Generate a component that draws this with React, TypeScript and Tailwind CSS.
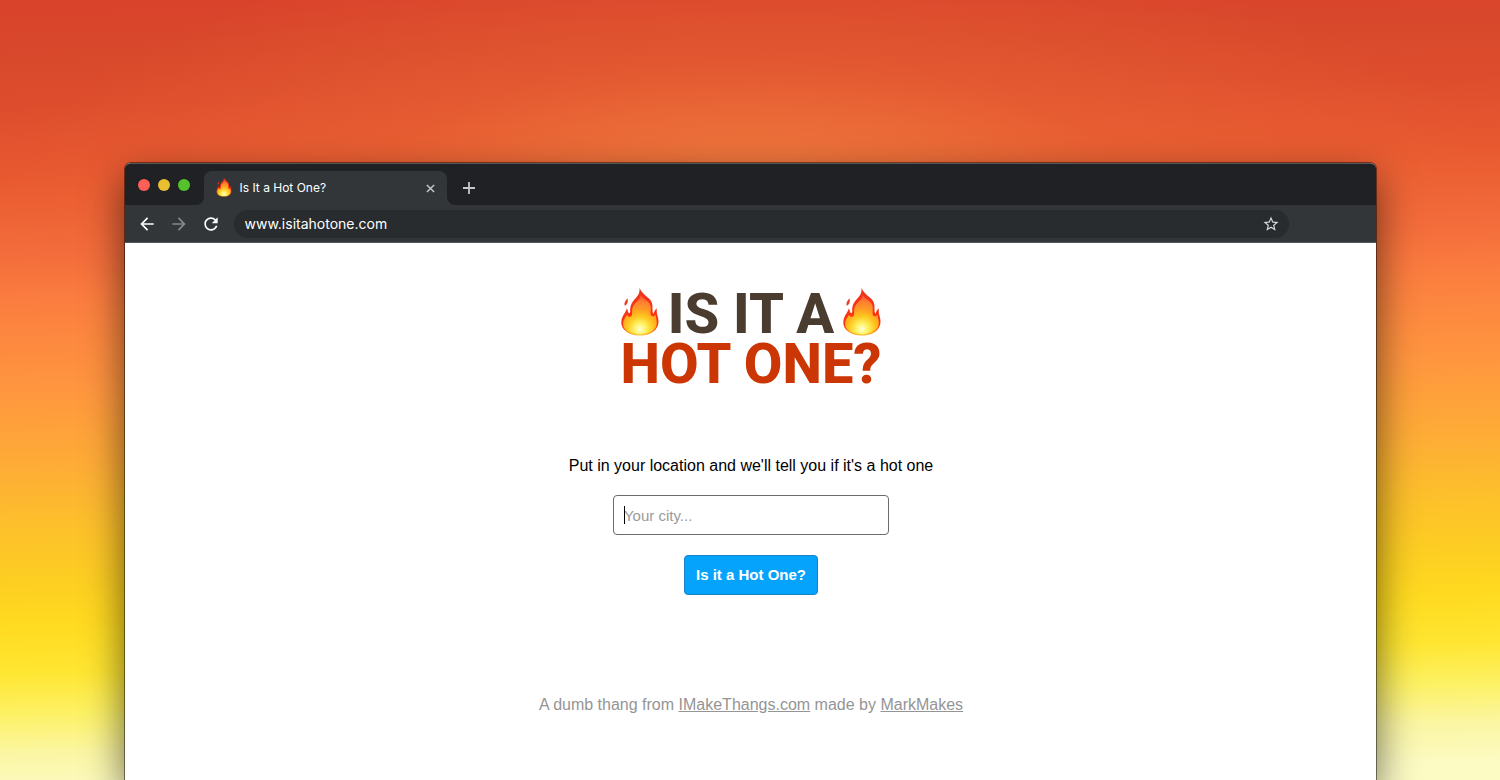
import React, { useState } from "react";

const NAV_ICON = "h-5 w-5 fill-current";

function Flame({ id, className }: { id: string; className: string }) {
  return (
    <svg viewBox="0 2 40 50" className={className} aria-hidden="true" overflow="visible">
      <defs>
        <radialGradient id={`${id}-outer`} gradientUnits="userSpaceOnUse" cx="20" cy="44" r="40">
          <stop offset="0" stopColor="#ffd83a" />
          <stop offset="0.28" stopColor="#ff9a1c" />
          <stop offset="0.46" stopColor="#fb3512" />
          <stop offset="0.78" stopColor="#f5321a" />
          <stop offset="1" stopColor="#ea351c" />
        </radialGradient>
        <radialGradient id={`${id}-inner`} gradientUnits="userSpaceOnUse" cx="20" cy="42" r="34">
          <stop offset="0" stopColor="#fffee0" />
          <stop offset="0.16" stopColor="#fff468" />
          <stop offset="0.38" stopColor="#ffc81f" />
          <stop offset="0.58" stopColor="#ff9d24" />
          <stop offset="0.8" stopColor="#ff7f30" />
          <stop offset="1" stopColor="#f9502c" />
        </radialGradient>
      </defs>
      <path
        fill={`url(#${id}-outer)`}
        d="M19.5 1C20 5 18.7 8 15.8 11C12.5 14.5 10 17.8 10.2 24C10.3 26.5 8.6 27 8 24.8C7.7 23.2 7.4 22.2 6.7 21.6C6.4 25 1.8 28.3 1.3 35C0.9 42.5 8.5 48.5 20 48.5C31.5 48.5 38.5 42.5 38.5 34.5C38.5 29.6 36.3 27.8 36.8 21.2C35 22.6 34 24.6 33.7 26.6C32.1 25.8 32.8 22.5 32.3 17.5C31.7 10.6 23.5 9.6 19.5 1Z"
      />
      <path fill="#ee3b24" d="M7.5 11.2C8.3 14.6 7.7 17 4.8 18.8C3.7 16.2 5 14 7.5 11.2Z" />
      <path
        fill={`url(#${id}-inner)`}
        d="M20.8 7.5C20.8 12 15.2 15.5 13.2 19C11.2 22.6 13 27.9 11.4 29.2C9.8 30.4 7.6 29.6 7.1 27.7C5.2 30.5 3 33 3.1 37C3.5 43.8 11 47.2 20 47.2C29.2 47.2 36.7 43 36.8 36C36.9 33 35.7 30.5 35.5 27.7C33.5 29.9 31.2 29.6 30.7 27.5C30.1 25 31.4 21.8 30.3 18.1C28.8 13.6 22.8 12.5 20.8 7.5Z"
      />
    </svg>
  );
}

function TabBar() {
  return (
    <div className="flex items-end bg-[#202124] pt-[7px]">
      <div className="flex gap-2 self-start pt-2 pr-[14px] pl-[13px]">
        <span className="h-3 w-3 rounded-full bg-[#fb5f57]" />
        <span className="h-3 w-3 rounded-full bg-[#e8bf30]" />
        <span className="h-3 w-3 rounded-full bg-[#55c22c]" />
      </div>
      <div className="relative flex h-[34px] w-[243px] items-center rounded-t-lg bg-[#323639] px-3 text-white">
        <Flame id="favicon" className="h-5 w-4" />
        <span className="ml-2 flex-1 text-xs">Is It a Hot One?</span>
        <button type="button" aria-label="Close tab" className="text-[#c5c8ca]">
          <svg viewBox="0 0 10 10" className="h-[9px] w-[9px]" fill="none" stroke="currentColor" strokeWidth="1.6">
            <path d="M1 1L9 9M9 1L1 9" />
          </svg>
        </button>
        <svg viewBox="0 0 8 8" className="absolute bottom-0 -left-2 h-2 w-2 fill-[#323639]" aria-hidden="true">
          <path d="M8 0V8H0A8 8 0 0 0 8 0Z" />
        </svg>
        <svg viewBox="0 0 8 8" className="absolute -right-2 bottom-0 h-2 w-2 fill-[#323639]" aria-hidden="true">
          <path d="M0 0V8H8A8 8 0 0 1 0 0Z" />
        </svg>
      </div>
      <button type="button" aria-label="New tab" className="flex h-[34px] items-center px-4 text-[#c5c8ca]">
        <svg viewBox="0 0 12 12" className="h-3 w-3" fill="none" stroke="currentColor" strokeWidth="1.8">
          <path d="M6 0V12M0 6H12" />
        </svg>
      </button>
    </div>
  );
}

function Toolbar() {
  const [url, setUrl] = useState("www.isitahotone.com");

  return (
    <div className="flex h-[38px] items-center border-b border-[#54585b] bg-[#323639] pr-[87px] pl-3 text-white">
      <div className="flex items-center gap-3">
        <button type="button" aria-label="Back">
          <svg viewBox="0 0 24 24" className={NAV_ICON}>
            <path d="M20 11H7.83l5.59-5.59L12 4l-8 8 8 8 1.41-1.41L7.83 13H20v-2z" />
          </svg>
        </button>
        <button type="button" aria-label="Forward" className="text-[#86898c]">
          <svg viewBox="0 0 24 24" className={NAV_ICON}>
            <path d="M12 4l-1.41 1.41L16.17 11H4v2h12.17l-5.58 5.59L12 20l8-8z" />
          </svg>
        </button>
        <button type="button" aria-label="Reload">
          <svg viewBox="0 0 24 24" className={NAV_ICON}>
            <path d="M17.65 6.35C16.2 4.9 14.21 4 12 4c-4.42 0-7.99 3.58-7.99 8s3.57 8 7.99 8c3.73 0 6.84-2.55 7.73-6h-2.08c-.82 2.33-3.04 4-5.65 4-3.31 0-6-2.69-6-6s2.69-6 6-6c1.66 0 3.14.69 4.22 1.78L13 11h7V4l-2.35 2.35z" />
          </svg>
        </button>
      </div>
      <div className="ml-[13px] flex h-7 flex-1 items-center rounded-full bg-[#282c2f] pr-[9px] pl-[11px]">
        <input
          type="text"
          aria-label="Address"
          value={url}
          onChange={(event) => setUrl(event.target.value)}
          className="min-w-0 flex-1 bg-transparent text-sm outline-none"
        />
        <button type="button" aria-label="Bookmark this page" className="text-[#d5d7d9]">
          <svg viewBox="0 0 24 24" className="h-[18px] w-[18px] fill-current">
            <path d="M22 9.24l-7.19-.62L12 2 9.19 8.63 2 9.24l5.46 4.73L5.82 21 12 17.27 18.18 21l-1.63-7.03L22 9.24zM12 15.4l-3.76 2.27 1-4.28-3.32-2.88 4.38-.38L12 6.1l1.71 4.04 4.38.38-3.32 2.88 1 4.28L12 15.4z" />
          </svg>
        </button>
      </div>
    </div>
  );
}

function Logo() {
  return (
    <h1 className="flex w-[262px] flex-col text-center font-['Roboto',sans-serif] text-[56px] leading-[50px] font-extrabold whitespace-nowrap">
      <span className="flex items-center justify-between text-[#4b3c30]">
        <Flame id="flame-left" className="h-[50px] w-10" />
        <span>IS IT A</span>
        <Flame id="flame-right" className="h-[50px] w-10" />
      </span>
      <span className="text-[#cb3604]">HOT ONE?</span>
    </h1>
  );
}

function LocationForm() {
  const [city, setCity] = useState("");

  return (
    <form onSubmit={(event) => event.preventDefault()} className="mt-[65px] flex flex-col items-center">
      <label htmlFor="city" className="text-base text-black">
        Put in your location and we'll tell you if it's a hot one
      </label>
      <div className="relative mt-[17px]">
        <input
          id="city"
          type="text"
          value={city}
          placeholder="Your city..."
          onChange={(event) => setCity(event.target.value)}
          className="block h-10 w-[276px] rounded border border-[#6b6b6b] px-[10px] text-[15px] text-black outline-none placeholder:text-[#9a9a9a]"
        />
        {city === "" ? <span className="absolute top-[11px] left-[11px] h-[18px] w-px bg-black" /> : null}
      </div>
      <button
        type="submit"
        className="mt-5 h-10 rounded border border-[#1583c4] bg-[#05a3fc] px-[11px] text-[15px] font-bold text-white"
      >
        Is it a Hot One?
      </button>
    </form>
  );
}

export default function App() {
  return (
    <div className="min-h-screen overflow-hidden bg-[radial-gradient(ellipse_50%_32%_at_50%_24%,rgba(242,132,66,0.8),rgba(236,104,54,0.45)_50%,rgba(230,90,45,0)),linear-gradient(178.8deg,#d9422b_0%,#d8482b_7%,#dd4d2d_13%,#e85930_22%,#f46e3c_32%,#fb7d3f_37%,#ff963f_48%,#feab37_57%,#fdc02b_65%,#fdcf22_72%,#ffda20_77%,#ffe632_83%,#fdf164_88%,#fbf6a4_93%,#fcfbc4_98%)] px-[8.3%] pt-[163px] font-['Liberation_Sans',Arial,sans-serif]">
      <div className="min-h-[calc(100vh-163px)] rounded-t-md bg-white shadow-[0_16px_40px_rgba(0,0,0,0.6),0_0_0_1px_rgba(0,0,0,0.45)]">
        <header className="overflow-hidden rounded-t-md border-t border-[#55575a] bg-[#202124] font-['Inter',sans-serif]">
          <TabBar />
          <Toolbar />
        </header>
        <main className="flex flex-col items-center pt-[46px] pl-0.5">
          <Logo />
          <LocationForm />
          <footer className="mt-[98px] text-base text-[#959595]">
            A dumb thang from{" "}
            <a href="#imakethangs" className="underline">
              IMakeThangs.com
            </a>{" "}
            made by{" "}
            <a href="#markmakes" className="underline">
              MarkMakes
            </a>
          </footer>
        </main>
      </div>
    </div>
  );
}
